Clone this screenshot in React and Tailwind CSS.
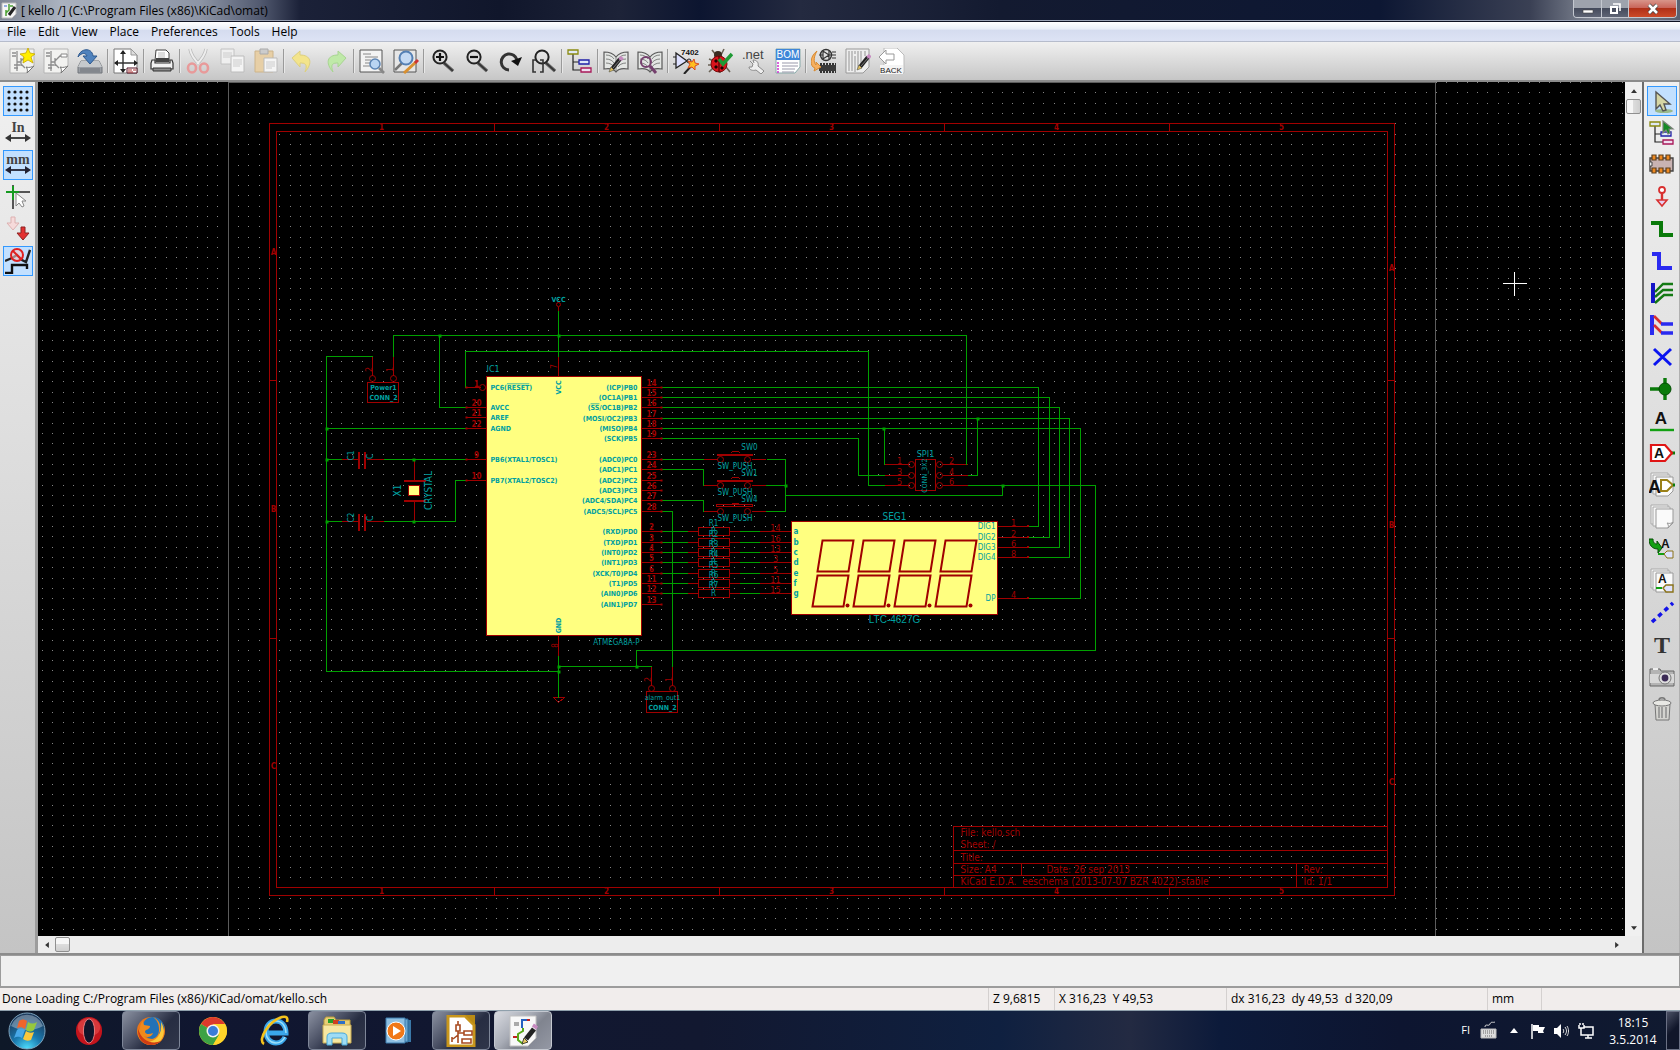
import React from "react";

const UI = "font-['Open_Sans','Noto_Sans',sans-serif]";

/* ---------- small drawing helpers ---------- */

function Icon({ children, size = 26 }) {
  return (
    <svg width={size} height={size} viewBox="0 0 26 26" fill="none" aria-hidden="true" className="shrink-0">
      {children}
    </svg>
  );
}

const Pencil = ({ x = 0, y = 0 }) => (
  <g transform={`translate(${x} ${y})`}>
    <path d="M3 12 11 2" stroke="#222" strokeWidth="4" />
    <path d="M4 11 11 3" stroke="#777" strokeWidth="1" />
    <path d="M11 3 13 0" stroke="#c78ac0" strokeWidth="4" />
    <path d="m0 15 2-5 3 3z" fill="#e0c060" stroke="#554" strokeWidth=".6" />
  </g>
);

const SheetIcon = ({ star }) => (
  <Icon>
    <path d="M1 1h24v17l-7 7H1z" fill="#f2f2f0" stroke="#b4b4b4" />
    <path d="M18 25c1-3 0-5-1-6 3 1 6 0 8-1z" fill="#fff" stroke="#777" />
    <path d="M3 5h4M3 8h4M8 3v20M8 14h4M12 10v8M12 13l5-5h3M12 16l4 4M5 17h6M5 20h4" stroke="#8d8d8d" strokeWidth="1.3" />
    {star ? (
      <path d="m19 0 2 5 5 1-4 3 2 6-5-3-5 3 1-6-4-3 6-1z" fill="#ffee00" stroke="#c8a800" strokeWidth=".8" />
    ) : (
      <path d="M18 6h6v3h-6z" fill="#fff" stroke="#888" />
    )}
  </Icon>
);

const Glass = ({ sign, box }) => (
  <Icon>
    <path d="m15 15 9 8" stroke="#666" strokeWidth="3.4" />
    <path d="m15 15 9 8" stroke="#333" strokeWidth="1.6" />
    <circle cx="11" cy="9" r="6.6" fill={box ? "none" : "#dcdcdc"} stroke="#222" strokeWidth="2" />
    {sign && <path d={sign} stroke="#111" strokeWidth="2.2" />}
    {box && <path d="M5 12H2v12h3M9 12h3v12H9" stroke="#333" strokeWidth="1.6" />}
  </Icon>
);

const Tree = ({ cursor }) => (
  <Icon>
    <path d="M6 6v16h8M6 14h6" stroke="#222" strokeWidth="1.2" />
    <path d="M1 2h10v4H1z" fill="#dfe8f4" stroke="#8a8a10" strokeWidth="1.3" />
    <path d="M12 12h10v4H12z" fill="#dfe8f8" stroke="#2020a8" strokeWidth="1.3" />
    <path d="M14 20h10v4H14z" fill="#f0dff0" stroke="#a81858" strokeWidth="1.3" />
    {cursor && <path d="M14 1v12l3-3 2 4 2-1-1-4h4z" fill="#158a25" stroke="#7a8078" strokeWidth="1.2" />}
  </Icon>
);

const Book = ({ children }) => (
  <Icon>
    <path d="M1 4c5 0 9 1 12 5 3-4 7-5 12-5v17c-6-1-10 0-12 3-2-3-6-4-12-3z" fill="#e4e6e4" stroke="#5a5a5a" strokeWidth="1.2" />
    <path d="M13 9v14M3 7c4 0 7 2 8 4M3 11c4 0 7 2 8 4M3 15c4 0 7 2 8 4M23 7c-4 0-7 2-8 4M23 11c-4 0-7 2-8 4M23 15c-4 0-7 2-8 4" stroke="#808280" />
    {children}
  </Icon>
);

const label = "font-['Liberation_Sans',sans-serif] font-bold";
const light = "font-['Liberation_Sans',sans-serif]";
const serif = "font-['Liberation_Serif',serif] font-bold";

/* ---------- top toolbar ---------- */

const TOP = [
  ["New schematic", <SheetIcon star />],
  ["Open schematic", <SheetIcon />],
  ["Save", <Icon>
    <path d="M4 13h18l3 6v6H1v-6z" fill="#9a9ea4" stroke="#70747a" />
    <path d="M4 13h18l3 6H1z" fill="#c6c9cc" />
    <path d="M3 21h20M3 23h20" stroke="#6d7177" />
    <path d="M1 9C3 0 15-1 16 8h4l-7 8-7-8h4C9 5 5 4 1 9z" fill="#4f82bd" stroke="#2d588e" />
  </Icon>],
  null,
  ["Page settings", <Icon>
    <path d="M1 1h17l6 6v18H1z" fill="#fff" stroke="#777" />
    <path d="M18 1v6h6z" fill="#ddd" stroke="#999" />
    <path d="M2 15h22M10 3v21" stroke="#333" strokeWidth="1.4" />
    <path d="m5 12-4 3 4 3zM21 12l4 3-4 3zM7 6l3-4 3 4zM7 21l3 4 3-4z" fill="#222" />
    <path d="M14 20h10v5H14z" fill="#fff" stroke="#512" /><path d="M15 22h4M20 22h3M15 24h5" stroke="#a33" />
  </Icon>],
  null,
  ["Print", <Icon>
    <path d="M7 2h10l3 3v8H6z" fill="#fff" stroke="#444" />
    <path d="M9 5h7M9 7h7M9 9h7" stroke="#bbb" />
    <path d="M7 10h13v4H7z" fill="#444" />
    <path d="M3 12h3v3h15v-3h2l1 3v6H2v-6z" fill="#f1f1f1" stroke="#333" strokeWidth="1.2" />
    <path d="M4 20h18v3H4z" fill="#8b8b8b" stroke="#333" />
  </Icon>],
  null,
  ["Cut", <Icon>
    <path d="M5 1c1 6 5 11 9 15M21 1c-1 6-5 11-9 15" stroke="#b9b9b9" strokeWidth="3.4" />
    <path d="M5 1c1 6 5 11 9 15M21 1c-1 6-5 11-9 15" stroke="#eee" strokeWidth="1.8" />
    <ellipse cx="7" cy="20" rx="4" ry="4.5" stroke="#e89a9a" strokeWidth="2.6" />
    <ellipse cx="19" cy="20" rx="4" ry="4.5" stroke="#e89a9a" strokeWidth="2.6" />
  </Icon>],
  ["Copy", <Icon>
    <path d="M2 1h13v15H2z" fill="#efefef" stroke="#c2c2c2" /><path d="M4 5h9M4 7h9M4 9h7" stroke="#ccc" />
    <path d="M12 8h13v16H12z" fill="#f4f4f4" stroke="#bcbcbc" /><path d="M14 12h9M14 14h9M14 16h9M14 18h7" stroke="#ccc" />
  </Icon>],
  ["Paste", <Icon>
    <path d="M2 3h18v21H2z" fill="#e7cfa6" stroke="#cdb48a" /><path d="M7 1h8v5H7z" fill="#ccc" stroke="#aaa" />
    <path d="M11 10h13v14H11z" fill="#f5f5f5" stroke="#bbb" /><path d="M13 14h9M13 16h9M13 18h9M13 20h6" stroke="#ccc" />
  </Icon>],
  null,
  ["Undo", <Icon><path d="M3 10l8-7v4c11 0 13 8 5 17 3-8 0-9-5-9v4z" fill="#f3e48b" stroke="#dccf80" /></Icon>],
  ["Redo", <Icon><path d="M23 10l-8-7v4C4 7 2 15 10 24c-3-8 0-9 5-9v4z" fill="#bfe9a8" stroke="#a8d492" /></Icon>],
  null,
  ["Find", <Icon>
    <path d="M1 2h22v22H1z" fill="#f3f3f3" stroke="#555" /><path d="M4 6h8M6 9h13M6 12h6M6 15h5M4 18h7" stroke="#888" />
    <circle cx="16" cy="16" r="5" fill="#b9d4f2" stroke="#5c84b4" strokeWidth="1.5" /><path d="m20 20 5 5" stroke="#888" strokeWidth="2.6" />
  </Icon>],
  ["Find and replace", <Icon>
    <path d="M1 2h22v22H1z" fill="#e6e6e6" stroke="#555" /><path d="m2 22 7-7" stroke="#777" strokeWidth="2.5" />
    <circle cx="13" cy="10" r="6.5" fill="#c5daf3" stroke="#5580b4" strokeWidth="2" />
    <path d="m11 25 12-11" stroke="#d99030" strokeWidth="3" /><path d="m22 15 3-3" stroke="#c33" strokeWidth="3" />
  </Icon>],
  null,
  ["Zoom in", <Glass sign="M7 9h8M11 5v8" />],
  ["Zoom out", <Glass sign="M7 9h8" />],
  ["Redraw view", <Icon><path d="M12 22A8 8 0 1 1 20 12" stroke="#333" strokeWidth="3" /><path d="m14 13 11-4-4 9z" fill="#111" /></Icon>],
  ["Zoom to fit", <Glass box />],
  null,
  ["Navigate hierarchy", <Tree />],
  null,
  ["Library editor", <Book><Pencil x={6} y={9} /></Book>],
  ["Library browser", <Book><circle cx="9" cy="14" r="5" stroke="#75406e" strokeWidth="2" /><path d="m13 18 6 7" stroke="#75406e" strokeWidth="3" /></Book>],
  null,
  ["Annotate schematic", <Icon>
    <text x="8" y="7" fontSize="8" className={label} fill="#111">7402</text>
    <path d="M3 5v15l11-7z" fill="#dde0ff" stroke="#222" strokeWidth="1.3" /><path d="M0 9h3M0 16h3" stroke="#222" />
    <circle cx="16" cy="13" r="2" stroke="#222" /><path d="m11 26 9-10" stroke="#222" strokeWidth="2" />
    <path d="m21 11 1 4 4 1-4 2 0 4-3-3-4 1 2-4-2-3 4 1z" fill="#ffbf20" stroke="#d84a20" />
  </Icon>],
  ["Electric rules check", <Icon>
    <path d="M5 2l4 5M17 1l-3 6M2 11l5 2M2 24l5-5M13 25v-3M23 24l-4-5M1 17h4" stroke="#6a6256" strokeWidth="1.6" />
    <circle cx="11" cy="7" r="4" fill="#3b2b20" /><circle cx="12" cy="16" r="8" fill="#d8141c" stroke="#7a0a0a" />
    <path d="M12 8v16" stroke="#300" /><path d="M8 12h2v2H8zM8 18h2v2H8zM14 19h2v2h-2z" fill="#200" stroke="#200" />
    <path d="m12 11 4 5 9-10" stroke="#1f9a35" strokeWidth="3.6" />
  </Icon>],
  ["Generate netlist", <Icon>
    <text x="1" y="11" fontSize="13" className={light} fill="#444">.net</text>
    <path d="M9 14l3 3-1 3-3 0c0 3 4 4 7 3l5 4 3-3-6-5c1-3-1-6-5-6l1 3" transform="translate(0 -1)" fill="#eee" stroke="#8a8a8a" />
  </Icon>],
  ["Bill of materials", <Icon>
    <path d="M1 1h24v18l-5 6H1z" fill="#fff" stroke="#8aa" /><path d="M1 1h24v11H1z" fill="#3f86d8" />
    <text x="13" y="10" textAnchor="middle" fontSize="10" className={light} fill="#fff">BOM</text>
    <path d="M3 14v11" stroke="#d030d0" strokeWidth="1.5" strokeDasharray="2 1" /><path d="M7 15h16M7 18h16M7 21h13M7 24h12" stroke="#99a" />
  </Icon>],
  null,
  ["Assign footprints", <Icon>
    <circle cx="15" cy="7" r="5.500" stroke="#333" strokeWidth="1.4" /><path d="M8 7h4M18 7h7M12 3v8l6-4zM18 3v8M21 4h4M21 10h4" stroke="#333" strokeWidth="1.2" />
    <path d="M8 17h17v6H8z" fill="#3a3a3a" /><path d="M9 24h16M9 16h16" stroke="#333" strokeWidth="2" strokeDasharray="2 1" />
    <path d="M6 3C-2 9-1 19 4 20l-1 3 7-4-5-5v3C2 14 3 8 6 3z" fill="#f6b060" stroke="#d88a30" />
  </Icon>],
  ["Board editor", <Icon>
    <path d="M1 1h23v18l-6 6H1z" fill="#eee" stroke="#999" />
    <path d="M4 3v20M7 3v20M10 8v16M13 3v18M16 3v13M10 3v3M20 3v5" stroke="#b2b2b2" strokeWidth="1.5" /><Pencil x={12} y={7} />
  </Icon>],
  ["Back annotate", <Icon>
    <path d="M5 0h13l7 7v18H5z" fill="#fff" stroke="#bbb" /><path d="m0 9 7-7v4h8v6H7v4z" fill="#fff" stroke="#999" />
    <path d="M1 17h23v9H1z" fill="#f4f4f4" /><text x="12" y="25" textAnchor="middle" fontSize="8" className={light} fill="#222">BACK</text>
  </Icon>],
];

/* ---------- left toolbar ---------- */

const LEFT = [
  ["Show grid", true, <Icon>{[4, 10, 16, 22].map((x) => [4, 10, 16, 22].map((y) => <circle key={x + "-" + y} cx={x} cy={y} r="1.6" fill="#111" />))}</Icon>],
  ["Units in inches", false, <Icon>
    <text x="13" y="12" textAnchor="middle" fontSize="14" className={serif} fill="#444">In</text>
    <path d="M4 18h18" stroke="#333" strokeWidth="1.8" /><path d="m6 14-6 4 6 4zM20 14l6 4-6 4z" fill="#333" />
  </Icon>],
  ["Units in millimeters", true, <Icon>
    <text x="13" y="12" textAnchor="middle" fontSize="14" className={serif} fill="#444">mm</text>
    <path d="M4 18h18" stroke="#223" strokeWidth="1.8" /><path d="m6 14-6 4 6 4zM20 14l6 4-6 4z" fill="#223" />
  </Icon>],
  ["Cursor shape", false, <Icon>
    <path d="M1 8h24M8 1v24" stroke="#555" strokeWidth="2" /><path d="M1 8h13M8 2v14" stroke="#169a20" strokeWidth="2" />
    <path d="M11 9v13l3-3 3 4 2-1-2-5h4z" fill="#fff" stroke="#888" />
  </Icon>],
  ["Show hidden pins", false, <Icon>
    <path d="M6 1h4v6h4l-6 7-6-7h4z" fill="#f6dada" stroke="#dcb0b0" /><path d="M16 11h4v6h4l-6 7-6-7h4z" fill="#e33030" stroke="#8c2222" />
  </Icon>],
  ["Horizontal and vertical orientation only", true, <Icon>
    <path d="m0 13 7-3 5-3 5 5 4 2 4-12" stroke="#222" strokeWidth="2.4" /><path d="M0 25h7v-8h15v4" stroke="#111" strokeWidth="2.4" />
    <circle cx="12" cy="7" r="6" fill="#f7c8c8" fillOpacity=".6" stroke="#e02020" strokeWidth="2" /><path d="m8 3 8 8" stroke="#e02020" strokeWidth="2" />
  </Icon>],
];

/* ---------- right toolbar ---------- */

const Pages = ({ children }) => (
  <Icon>
    <path d="M2 1h17v19H2z" fill="#f4f4f4" stroke="#aaa" /><path d="M4 3h17v19H4z" fill="#f6f6f6" stroke="#aaa" />
    <path d="M7 5h17v14l-5 5H7z" fill="#fafafa" stroke="#999" />{children}
  </Icon>
);
const flag = <path d="M14 20l3-3h7v7h-7z" fill="#dfe3ff" stroke="#8a7318" strokeWidth="1.4" />;

const RIGHT = [
  ["Select", true, <Icon><ellipse cx="15" cy="23" rx="9" ry="2" fill="#9ab88a" /><path d="M7 4v17l4-4 3 6 3-1-2-6h6z" fill="#d6d6a4" stroke="#555" strokeWidth="1.4" /></Icon>],
  ["Ascend or descend hierarchy", false, <Tree cursor />],
  ["Place component", false, <Icon>
    <path d="M1 6h23v13H1z" fill="#c9b3b3" stroke="#444" strokeWidth="1.4" />
    {[4, 11, 18].map((x) => [3, 16].map((y) => <path key={x + "-" + y} d={`M${x - 1} ${y}h4v5h-4z`} fill="#f08a20" stroke="#5c4020" strokeWidth="1.2" />))}
    <path d="M1 10h2v4H1" fill="#eee" stroke="#444" />
  </Icon>],
  ["Place power port", false, <Icon><circle cx="13" cy="6" r="3" fill="#fff" stroke="#d83030" strokeWidth="1.8" /><path d="M13 9v9" stroke="#d83030" strokeWidth="2.4" /><path d="M8 16h10l-5 6z" fill="#e8d0f0" stroke="#d83030" strokeWidth="1.6" /></Icon>],
  ["Place wire", false, <Icon><path d="M2 7h10v12h12" stroke="#0a7a0a" strokeWidth="4" /></Icon>],
  ["Place bus", false, <Icon><path d="M3 6h7v14h13" stroke="#2a2af0" strokeWidth="4" /></Icon>],
  ["Place wire to bus entry", false, <Icon><path d="M4 3v20" stroke="#1515c8" strokeWidth="4" /><path d="m6 12 8-8h10M6 17l8-7h10M6 23l9-8h9" stroke="#147a14" strokeWidth="2.4" /></Icon>],
  ["Place bus to bus entry", false, <Icon><path d="M3 3v20" stroke="#2a2af0" strokeWidth="4" /><path d="m5 4 8 8M5 13l8 8" stroke="#d83030" strokeWidth="2.6" /><path d="M12 12h12M12 21h12" stroke="#2a2af0" strokeWidth="3.4" /></Icon>],
  ["Place no-connect flag", false, <Icon><path d="m5 5 17 16M22 5 5 21" stroke="#0a14f0" strokeWidth="3" /></Icon>],
  ["Place junction", false, <Icon><path d="M1 13h14M16 2v22" stroke="#0a7a0a" strokeWidth="3.4" /><circle cx="16" cy="13" r="6" fill="#0a7a0a" stroke="#054f05" /></Icon>],
  ["Place net name", false, <Icon><text x="12" y="16" textAnchor="middle" fontSize="17" className={label} fill="#111">A</text><path d="M1 22h24" stroke="#12a012" strokeWidth="2.4" /></Icon>],
  ["Place global label", false, <Icon><path d="M22 13h4" stroke="#0a7a0a" strokeWidth="3" /><path d="M2 5h14l7 8-7 8H2z" fill="#fff" stroke="#e01515" strokeWidth="2.2" /><text x="10" y="18" textAnchor="middle" fontSize="14" className={label} fill="#111">A</text></Icon>],
  ["Place hierarchical label", false, <Pages><text x="-1" y="21" fontSize="18" className={label} fill="#111">A</text><path d="M12 8h6l6 5-6 6h-6z" fill="#fff" stroke="#9a8018" strokeWidth="2" /><path d="M24 13h2" stroke="#0a7a0a" strokeWidth="3" /></Pages>],
  ["Place hierarchical sheet", false, <Pages><path d="M19 24c1-2 0-4-1-5 3 1 5 0 6-1z" fill="#fff" stroke="#999" /></Pages>],
  ["Import hierarchical label", false, <Icon><text x="12" y="12" fontSize="12" className={label} fill="#111">A</text><path d="M0 3h4c0 4 2 5 4 5V5l5 7-4 5v-4C3 13 0 9 0 3z" fill="#12a012" stroke="#064f06" /><path d="M9 18h8" stroke="#12a012" strokeWidth="2" /><path d="m15 18 3-3h6v7h-6z" fill="#dfe3ff" stroke="#8a7318" /></Icon>],
  ["Place hierarchical pin", false, <Pages><text x="9" y="15" fontSize="12" className={label} fill="#111">A</text><path d="M7 20h6" stroke="#12a012" strokeWidth="2" />{flag}</Pages>],
  ["Place graphic line", false, <Icon><path d="M3 22 24 3" stroke="#1212e8" strokeWidth="3.6" strokeDasharray="4.5 4" /></Icon>],
  ["Place text", false, <Icon><text x="13" y="21" textAnchor="middle" fontSize="24" className={serif} fill="#333">T</text></Icon>],
  ["Add image", false, <Icon><path d="M1 5h10l1 2h13v15H1z" fill="#b4b4b4" stroke="#666" /><path d="M1 10h24v9H1z" fill="#d8d8d8" /><path d="M4 5h5" stroke="#eee" strokeWidth="2" /><circle cx="16" cy="14" r="6" fill="#ddd" stroke="#777" /><circle cx="16" cy="14" r="3.4" fill="#3b2a55" /></Icon>],
  ["Delete", false, <Icon><path d="M6 8h15l-1 16H7z" fill="#d4d4d0" stroke="#777" /><path d="M10 11v11M13 11v11M17 11v11" stroke="#888" strokeWidth="1.4" /><ellipse cx="13" cy="7" rx="9" ry="3" fill="#e8e8e4" stroke="#777" /><path d="M10 4c0-3 6-3 6 0" stroke="#777" strokeWidth="1.4" /></Icon>],
];

/* ---------- schematic ---------- */

const RED = "#a00000";
const TEAL = "#00a0a0";
const NARROW = "font-['DejaVu_Sans_Condensed','DejaVu_Sans',sans-serif]";
const NARROW_BOLD = "font-['DejaVu_Sans_Condensed','DejaVu_Sans',sans-serif] font-bold";

function T({ x, y, s = 8, a = "start", c = TEAL, r, bold, wide, children }) {
  return (
    <text x={x} y={y} fontSize={s} textAnchor={a} fill={c} dominantBaseline="central"
      transform={r ? `rotate(-90 ${x} ${y})` : undefined}
      className={wide ? light : bold ? NARROW_BOLD : NARROW}>{children}</text>
  );
}

function gridPath() {
  let d = "";
  for (let i = -18; i < 240; i++) {
    const x = Math.floor(228.22 + i * 10.326);
    for (let j = 0; j < 130; j++) d += `M${x} ${Math.floor(82.4 + j * 10.326)}h1v1h-1z`;
  }
  return d;
}
const GRID = gridPath();

const PB = [
  [387, "(ICP)PB0", "14"], [397, "(OC1A)PB1", "15"], [407, "PB2", "16"], [418, "(MOSI/OC2)PB3", "17"],
  [428, "(MISO)PB4", "18"], [438, "(SCK)PB5", "19"], [459, "(ADC0)PC0", "23"], [469, "(ADC1)PC1", "24"],
  [480, "(ADC2)PC2", "25"], [490, "(ADC3)PC3", "26"], [500, "(ADC4/SDA)PC4", "27"], [511, "(ADC5/SCL)PC5", "28"],
  [531, "(RXD)PD0", "2"], [542, "(TXD)PD1", "3"], [552, "(INT0)PD2", "4"], [562, "(INT1)PD3", "5"],
  [573, "(XCK/T0)PD4", "6"], [583, "(T1)PD5", "11"], [593, "(AIN0)PD6", "12"], [604, "(AIN1)PD7", "13"],
];
const PL = [[407, "AVCC", "20"], [417, "AREF", "21"], [428, "AGND", "22"], [459, "PB6(XTAL1/TOSC1)", "9"], [480, "PB7(XTAL2/TOSC2)", "10"]];
const SEG = [[531, "a", "14"], [542, "b", "16"], [552, "c", "13"], [562, "d", "3"], [573, "e", "5"], [583, "f", "11"], [593, "g", "15"]];
const DIG = [[526, "DIG1", "1"], [537, "DIG2", "2"], [547, "DIG3", "6"], [557, "DIG4", "8"], [598, "DP", "4"]];
const SWITCH = [[459, "SW0"], [485, "SW1"], [511, "SW4"]];
const JUNCTIONS = [[439, 335], [558, 335], [326, 428], [326, 459], [326, 521], [413, 459], [413, 521], [785, 485], [883, 428], [977, 418], [1002, 485], [558, 666], [558, 671], [636, 666]];

const WIRES = [
  "M558 310V356", "M393 356V335H966V464", "M372 356H326V671H558", "M439 335V407H465", "M465 387V351H868V485H884",
  "M326 428H465", "M326 459H341M383 459H465", "M326 521H341M383 521H455V480H465",
  "M661 387H1038V526H1028", "M661 397H1049V537H1028", "M661 407H1059V547H1028", "M661 418H1069V557H1028", "M661 428H1080V598H1028",
  "M661 438H858V475H884", "M884 428V464", "M967 475H977V418", "M967 485H1095V650H636V666", "M1002 485V495H785",
  "M661 459H703M766 459H785V511H765M765 485H785", "M661 469H703V485", "M661 500H703V511", "M661 511H672V666",
  "M558 655V697", "M558 666H651",
].join("");

const PINS = [
  "M558 306V310M558 356V376M558 635V655", "M393 356V375M372 356V375M651 666V685M672 666V685",
  "M465 387H480", "M341 459H358M366 459H383M341 521H358M366 521H383", "M414 459V480M414 500V521",
  "M884 464H908M884 475H908M884 485H908M942 464H967M942 475H967M942 485H967",
].join("");

const COLS = [["1", 381], ["2", 606], ["3", 831], ["4", 1056], ["5", 1281]];

function Schematic() {
  return (
    <svg className="absolute inset-0 h-full w-full" role="img" aria-label="Schematic sheet kello.sch">
      <g transform="translate(-38 -82)">
        <path d={GRID} fill="#848484" shapeRendering="crispEdges" />
        <g transform="translate(0.5 0.5)">
          <g fill="none" strokeWidth="1" shapeRendering="crispEdges">
            <path d="M228 82H1435V936H228z" stroke="#5c5c5c" />
            <path stroke={RED} d="M269 123H1394V895H269zM276 131H1387V887H276zM494 123v8M719 123v8M944 123v8M1169 123v8M494 887v8M719 887v8M944 887v8M1169 887v8M269 380h7M269 638h7M1387 380h7M1387 638h7" />
            <path stroke={RED} d="M953 887V826H1387M953 850H1387M953 863H1387M953 875H1387M1021 863v12M1296 863v24" />
          </g>
          {COLS.map(([n, x]) => <g key={n}><T x={x} y={127} a="middle" c={RED} s={8} bold>{n}</T><T x={x} y={891} a="middle" c={RED} s={8} bold>{n}</T></g>)}
          {[["A", 252, 268], ["B", 509, 525], ["C", 766, 782]].map(([n, l, r]) => <g key={n}><T x={273} y={l} a="middle" c={RED} bold>{n}</T><T x={1391} y={r} a="middle" c={RED} bold>{n}</T></g>)}
          <T x={960} y={832} s={10} c={RED}>File: kello.sch</T>
          <T x={960} y={844} s={10} c={RED}>Sheet: /</T>
          <T x={960} y={857} s={10} c={RED}>Title:</T>
          <T x={960} y={869} s={10} c={RED}>Size: A4</T>
          <T x={1046} y={869} s={10} c={RED}>Date: 26 sep 2013</T>
          <T x={1303} y={869} s={10} c={RED}>Rev:</T>
          <T x={960} y={881} s={10} c={RED}>{"KiCad E.D.A.\u00a0 eeschema (2013-07-07 BZR 4022)-stable"}</T>
          <T x={1303} y={881} s={10} c={RED}>Id: 1/1</T>

          {/* component bodies */}
          <g shapeRendering="crispEdges" stroke={RED} fill="#ffff80">
            <path d="M486 376H641V635H486z" /><path d="M791 521H997V614H791z" /><path d="M408 485h11v10h-11z" />
            <g fill="none">
              <path d="M367 382h31v20h-31zM646 691h31v21h-31zM915 459h20v31h-20z" />
              <path d={PINS} />
              <path d="M358 451v17M364 451v17M358 513v17M364 513v17M403 480h22M403 500h22" strokeWidth="2" />
              <path d="M553 697h11l-6 5z" />
              {PB.map(([y]) => <path key={y} d={`M641 ${y}h20`} />)}
              {PL.map(([y]) => <path key={y} d={`M465 ${y}h21`} />)}
              {DIG.map(([y]) => <path key={y} d={`M997 ${y}h31m-2 -1h2`} />)}
              {SEG.map(([y]) => <path key={y} d={`M687 ${y}h11m31 0h10m20 0h32M698 ${y - 4}h31v8h-31z`} />)}
              {SWITCH.map(([y]) => <path key={y} d={`M703 ${y}h14m34 0h14M730 ${y - 6}l2-2h6l2 2`} />)}
              <path d="M716 454h36M716 480h36" strokeWidth="2" /><path d="M716 504h36v2h-36z" />
            </g>
          </g>
          <g fill="none" stroke={RED}>
            {[[372, 378], [393, 378], [651, 688], [672, 688], [482, 387], [911, 464], [911, 475], [911, 485], [939, 464], [939, 475], [939, 485]].map(([x, y]) => <circle key={x + "-" + y} cx={x} cy={y} r="3" />)}
            {SWITCH.map(([y]) => <g key={y}><circle cx="720" cy={y} r="3" /><circle cx="747" cy={y} r="3" /></g>)}
            <circle cx="558" cy="304" r="2" />
            {[0, 41, 82, 123].map((o) => (
              <g key={o} transform={`translate(${o} 0)`}>
                <path d="M822 540h31l-5 31h-31zM817 575h31l-5 31h-31z" strokeWidth="2" />
                <circle cx="847" cy="605" r="2" fill={RED} stroke="none" />
              </g>
            ))}
          </g>

          {/* wires and junctions */}
          <path d={WIRES} stroke="#00a000" fill="none" shapeRendering="crispEdges" />
          {SEG.map(([y]) => <path key={y} d={`M661 ${y}h26m52 0h20`} stroke="#00a000" shapeRendering="crispEdges" />)}
          {JUNCTIONS.map(([x, y]) => <rect key={x + "-" + y} x={x - 1} y={y - 1} width="3" height="3" fill="#00a000" />)}
          {PB.map(([y]) => <rect key={y} x="660" y={y - 1} width="2" height="2" fill={RED} />)}
          {[407, 417, 428, 459, 480, 387].map((y) => <rect key={y} x="465" y={y - 1} width="2" height="2" fill={RED} />)}

          {/* texts */}
          <T x={558} y={299} s={7} a="middle" bold>VCC</T>
          <T x={486} y={368} s={9}>IC1</T>
          <T x={558} y={387} s={7} a="middle" bold r>VCC</T>
          <T x={558} y={625} s={7} a="middle" bold r>GND</T>
          <T x={554} y={366} s={8} a="middle" c={RED} r>7</T>
          <T x={555} y={645} s={8} a="middle" c={RED} r>8</T>
          <T x={490} y={387} s={7} bold>PC6(<tspan className="overline">RESET</tspan>)</T>
          <T x={476} y={384} s={8} a="middle" c={RED} bold>1</T>
          {PL.map(([y, n, p]) => <g key={n}><T x={490} y={y} s={7} bold>{n}</T><T x={476} y={y - 4} s={8} a="middle" c={RED} bold>{p}</T></g>)}
          {PB.map(([y, n, p]) => (
            <g key={n}>
              <T x={637} y={y} s={7} a="end" bold>{n === "PB2" ? <>(<tspan className="overline">SS</tspan>/OC1B)PB2</> : n}</T>
              <T x={651} y={y - 4} a="middle" c={RED} bold>{p}</T>
            </g>
          ))}
          <T x={383} y={387} s={7} a="middle" bold>Power1</T>
          <T x={383} y={397} s={7} a="middle" bold>CONN_2</T>
          <T x={368} y={369} s={9} a="middle" c={RED} r>2</T>
          <T x={389} y={369} s={9} a="middle" c={RED} r>1</T>
          <T x={351} y={455} a="middle" r>C1</T><T x={370} y={456} a="middle" r>C</T>
          <T x={351} y={517} a="middle" r>C2</T><T x={370} y={518} a="middle" r>C</T>
          <T x={397} y={490} s={10} a="middle" r>X1</T>
          <T x={428} y={490} s={10} a="middle" r>CRYSTAL</T>
          {SWITCH.map(([y, n]) => <g key={n}><T x={749} y={y - 12} s={8} a="middle">{n}</T><T x={717} y={y + 7} s={8}>SW_PUSH</T></g>)}
          {SEG.map(([y, n, p], i) => (
            <g key={n}>
              <T x={713} y={y} s={8} a="middle">R</T>
              <T x={713} y={y - 8} s={8} a="middle">{"R" + (i + 1)}</T>
              <T x={775} y={y - 4} s={9} a="middle" c={RED}>{p}</T>
              <T x={793} y={y} s={8} bold>{n}</T>
            </g>
          ))}
          {DIG.map(([y, n, p]) => <g key={n}><T x={995} y={y} s={8} a="end">{n}</T><T x={1013} y={y - 4} s={9} a="middle" c={RED}>{p}</T></g>)}
          <T x={894} y={516} s={10} a="middle">SEG1</T>
          <T x={894} y={619} s={10} a="middle" wide>LTC-4627G</T>
          <T x={925} y={453} s={9} a="middle">SPI1</T>
          <T x={924} y={475} s={7} a="middle" r>CONN_3X2</T>
          {[["1", "2", 460], ["3", "4", 471], ["5", "6", 481]].map(([l, r, y]) => <g key={y}><T x={899} y={y} s={9} a="middle" c={RED}>{l}</T><T x={951} y={y} s={9} a="middle" c={RED}>{r}</T></g>)}
          <T x={639} y={642} s={8} a="end">ATMEGA8A-P</T>
          <T x={662} y={697} s={7} a="middle">alarm_out1</T>
          <T x={662} y={707} s={7} a="middle" bold>CONN_2</T>
          <T x={647} y={679} s={9} a="middle" c={RED} r>2</T>
          <T x={668} y={679} s={9} a="middle" c={RED} r>1</T>
          <path d="M1502 283h24M1514 271v24" stroke="#fff" shapeRendering="crispEdges" />
        </g>
      </g>
    </svg>
  );
}

/* ---------- taskbar icons ---------- */

const TASKS = [
  ["Opera", "", <svg width="28" height="30" viewBox="0 0 30 32"><ellipse cx="15" cy="16" rx="14" ry="15" fill="#c4141c" /><ellipse cx="15" cy="12" rx="12" ry="10" fill="#e65050" opacity=".6" /><ellipse cx="15" cy="16" rx="6" ry="13" fill="#10142a" stroke="#f08080" /></svg>],
  ["Firefox", "open", <svg width="32" height="32" viewBox="0 0 32 32"><circle cx="16" cy="16" r="14" fill="#e8751a" /><circle cx="18" cy="13" r="11" fill="#2272b8" /><path d="M18 2c7 3 9 10 6 17 3-1 5-4 5-6 2 10-4 17-13 17C7 30 1 22 3 13l2 2c0-5 1-7 3-9l1 4 6 1c0 4-5 3-5 6 1 3 5 2 8 1-1 4-6 5-9 3 5 6 15 3 15-6 0-6-2-10-6-13z" fill="#f08a1c" /><path d="M26 7c4 6 4 15-2 20-5 4-12 3-16-1 9 3 20-3 18-19z" fill="#fcc93a" /><path d="M3 13c-1 9 4 17 13 17 5 0 8-2 10-4-9 4-20 0-23-13z" fill="#cf3d14" /></svg>],
  ["Chrome", "", <svg width="30" height="30" viewBox="0 0 30 30"><circle cx="15" cy="15" r="14" fill="#ffd42a" /><path d="M15 15 2.900 8A14 14 0 0 1 27.100 8z" fill="#dc3a2c" /><path d="M15 15 2.900 8A14 14 0 0 0 15 29l6-10z" fill="#3da244" /><path d="M15 8h12.100A14 14 0 0 1 15 29l6-10z" fill="#ffd42a" /><circle cx="15" cy="15" r="6.500" fill="#f4f4f4" /><circle cx="15" cy="15" r="5" fill="#3a7cd8" /></svg>],
  ["Internet Explorer", "", <svg width="32" height="32" viewBox="0 0 32 32" fill="none"><path d="M26 22c-2 4-5 6-9 6-6 0-10-5-10-11S11 6 17 6s10 5 10 12H9" stroke="#3aa6ea" strokeWidth="5" /><path d="M26 22c-2 4-5 6-9 6-6 0-10-5-10-11S11 6 17 6s10 5 10 12" stroke="#9be0fb" strokeWidth="1.500" /><path d="M5 29C-2 25 10 6 23 2c5-1 6 1 5 5" stroke="#f4c21c" strokeWidth="2.600" /></svg>],
  ["Explorer", "open", <svg width="32" height="32" viewBox="0 0 32 32"><path d="M3 5l2-3h8l2 3h14v22H3z" fill="#e9cf74" stroke="#b89a3c" /><path d="M7 4h6v4H7z" fill="#28a028" /><path d="M12 5h6v4h-6z" fill="#d04020" /><path d="M17 6h7v3h-7z" fill="#2c70c8" /><path d="M2 10h28v18H2z" fill="#f7e7a2" stroke="#c9ab50" /><path d="M6 30V22c0-3 2-4 5-4h10c3 0 5 1 5 4v8h-5v-7H11v7z" fill="#9edcf5" stroke="#4aa8d8" /></svg>],
  ["Media Player", "", <svg width="28" height="28" viewBox="0 0 28 28"><path d="M7 3h19v22H7z" fill="#3a78a8" /><path d="M4 2h19v23H4z" fill="#6aa6d0" stroke="#2d6a98" /><path d="M1 1h19v25H1z" fill="#8fc0e2" stroke="#3c7cae" /><circle cx="11" cy="14" r="9" fill="#f07818" stroke="#fff" strokeWidth="1" /><path d="m8 9 8 5-8 5z" fill="#fff" /></svg>],
  ["KiCad", "open", <svg width="32" height="32" viewBox="0 0 32 32" fill="none"><path d="M3 1h17l9 9v21H3z" fill="#fff" stroke="#c8961c" strokeWidth="3" /><path d="M20 0h10v10z" fill="#b98a14" /><path d="M13 6v4M11 10h4v6h-4zM13 16v12M13 18h6M19 16h8v4h-8zM13 20l-5 4M17 24h9v4h-9zM7 22v5" stroke="#a84a20" strokeWidth="1.600" /></svg>],
  ["Eeschema", "active", <svg width="32" height="32" viewBox="0 0 32 32" fill="none"><path d="M3 1h26v22l-8 8H3z" fill="#f8f8f8" stroke="#c0c0c0" /><path d="M7 7h5v4H7z" fill="#aaa" /><path d="M15 13V5h6" stroke="#2460c0" strokeWidth="2" /><path d="M20 5h3M6 22h5" stroke="#c02020" strokeWidth="2" /><path d="M16 13v3l-5 3v6l5 4" stroke="#58a818" strokeWidth="2" /><path d="m19 24 8-10" stroke="#222" strokeWidth="5" /><path d="m27 13 2-3" stroke="#c78ac0" strokeWidth="5" /><path d="m15 29 2-6 4 4z" fill="#e8c860" stroke="#443" /></svg>],
];

const MENU = ["File", "Edit", "View", "Place", "Preferences", "Tools", "Help"];

const selected = "border border-[#3399ff] bg-[#c2e0ff]";

export default function App() {
  return (
    <div className={`flex h-screen w-full flex-col overflow-hidden bg-[#f0f0f0] text-[12px] text-black ${UI}`}>
      {/* title bar */}
      <header className="flex h-[22px] shrink-0 items-start border-b border-[#0c1020] bg-[linear-gradient(90deg,#7f8694_0,#aab2bf_60px,#8d95a5_200px,#525a70_260px,#1b2138_300px,#10162b_500px,#1d2338_620px,#0c1530_700px,#242a40_800px,#131a30_1000px,#0d1733_1380px,#3a4054_1530px,#8a909c_1600px,#596070_100%)]">
        <div className="flex h-[21px] w-full items-start border-b border-[#9aa2b4]">
          <div className="flex h-5 min-w-0 flex-1 items-center gap-[2px] pl-px">
            <svg width="18" height="18" viewBox="0 0 18 18" fill="none" aria-hidden="true">
              <path d="M1 2h14v11l-4 4H1z" fill="#f6f6f6" stroke="#bbb" /><path d="M8 3v6l-3 3M5 9v6M9 5h3" stroke="#4aa030" strokeWidth="1.500" /><path d="m8 14 6-8" stroke="#222" strokeWidth="3" /><path d="M3 5h3" stroke="#36c" />
            </svg>
            <h1 className="truncate pt-[2px] text-[12px] leading-5">[ kello /] (C:\Program Files (x86)\KiCad\omat)</h1>
          </div>
          <div className="mr-[3px] flex h-[18px] shrink-0 overflow-hidden rounded-b border border-t-0 border-[#c4c8d0]">
            <button aria-label="Minimize" className="flex w-[28px] items-center justify-center border-r border-[#c4c8d0] bg-[linear-gradient(#9ea3ad_45%,#454b5c_50%,#5e6474)]">
              <svg width="14" height="12" viewBox="0 0 14 12"><path d="M2 7h10v3H2z" fill="#fff" stroke="#444" strokeWidth=".6" /></svg>
            </button>
            <button aria-label="Restore" className="flex w-[27px] items-center justify-center border-r border-[#c4c8d0] bg-[linear-gradient(#9ea3ad_45%,#454b5c_50%,#5e6474)]">
              <svg width="14" height="14" viewBox="0 0 14 14" fill="none"><path d="M5 2h7v7" stroke="#fff" strokeWidth="1.600" /><path d="M3 5h6v6H3z" stroke="#fff" strokeWidth="2" /></svg>
            </button>
            <button aria-label="Close" className="flex w-[47px] items-center justify-center bg-[linear-gradient(#d8958a_0,#c9655a_45%,#b03018_50%,#cc4a28)]">
              <svg width="14" height="12" viewBox="0 0 14 12"><path d="m3 2 8 8M11 2l-8 8" stroke="#444" strokeWidth="4" /><path d="m3 2 8 8M11 2l-8 8" stroke="#fff" strokeWidth="2.600" /></svg>
            </button>
          </div>
        </div>
      </header>

      {/* menu */}
      <nav className="flex h-[20px] shrink-0 items-center gap-3 border-b border-[#b6bccc] bg-[linear-gradient(#ffffff_0,#e9eef7_38%,#d5dcef_42%,#dde3f5_100%)] pl-[7px]">
        {MENU.map((m) => <button key={m} className="leading-4">{m}</button>)}
      </nav>

      {/* main toolbar */}
      <div role="toolbar" aria-label="Main" className="flex h-[40px] shrink-0 items-center border-b-2 border-[#8c8c8c] bg-[linear-gradient(#f0f0f0,#c6c6c6)] pl-[5px]">
        {TOP.map((t, i) => t ? (
          <button key={i} aria-label={t[0]} title={t[0]} className="flex h-[34px] w-[34px] shrink-0 items-center justify-center">{t[1]}</button>
        ) : <div key={i} className="h-6 w-[2px] shrink-0 border-l border-[#9a9a9a] bg-[#e8e8e8]" />)}
      </div>

      {/* workspace */}
      <main className="flex min-h-0 flex-1 border-b-2 border-[#8c8c8c]">
        <div role="toolbar" aria-label="Options" className="flex w-[38px] shrink-0 flex-col items-start gap-[2px] border-r-[3px] border-[#9c9c9c] bg-[linear-gradient(#f0f0f0,#c4c4c4)] pt-1 pl-[3px]">
          {LEFT.map(([n, on, icon]) => (
            <button key={n} aria-label={n} title={n} className={`flex h-[30px] w-[30px] shrink-0 items-center justify-center ${on ? selected : ""}`}>{icon}</button>
          ))}
        </div>

        <div className="flex min-w-0 flex-1 flex-col">
          <div className="flex min-h-0 flex-1">
            <div className="relative min-w-0 flex-1 overflow-hidden bg-black"><Schematic /></div>
            <div className="flex w-[17px] shrink-0 flex-col items-center bg-[#f0f0f0]">
              <button aria-label="Scroll up" className="flex h-[17px] w-full items-center justify-center"><svg width="6" height="4" viewBox="0 0 8 5"><path d="m4 0 4 5H0z" fill="#333" /></svg></button>
              <div className="h-[15px] w-[15px] rounded-xs border border-[#8f8f8f] bg-[linear-gradient(90deg,#f6f6f6_45%,#dcdcdc_50%,#cfcfcf)]" />
              <div className="flex-1" />
              <button aria-label="Scroll down" className="flex h-[17px] w-full items-center justify-center"><svg width="6" height="4" viewBox="0 0 8 5"><path d="M0 0h8L4 5z" fill="#333" /></svg></button>
            </div>
          </div>
          <div className="flex h-[17px] shrink-0 items-center bg-[#ededed]">
            <button aria-label="Scroll left" className="flex h-full w-[17px] items-center justify-center"><svg width="4" height="6" viewBox="0 0 5 8"><path d="M5 0v8L0 4z" fill="#333" /></svg></button>
            <div className="h-[15px] w-[15px] rounded-xs border border-[#8f8f8f] bg-[linear-gradient(#f6f6f6_45%,#dcdcdc_50%,#cfcfcf)]" />
            <div className="flex-1" />
            <button aria-label="Scroll right" className="mr-[17px] flex h-full w-[17px] items-center justify-center"><svg width="4" height="6" viewBox="0 0 5 8"><path d="M0 0v8l5-4z" fill="#333" /></svg></button>
          </div>
        </div>

        <div role="toolbar" aria-label="Tools" className="flex w-[38px] shrink-0 flex-col items-end gap-[2px] border-r border-l-2 border-r-[#b0b0b0] border-l-[#6c6c6c] bg-[linear-gradient(#f0f0f0,#c4c4c4)] pt-1 pr-[2px]">
          {RIGHT.map(([n, on, icon]) => (
            <button key={n} aria-label={n} title={n} className={`flex h-[30px] w-[30px] shrink-0 items-center justify-center ${on ? selected : ""}`}>{icon}</button>
          ))}
        </div>
      </main>

      {/* message panel */}
      <div className="h-[33px] shrink-0 border border-b-2 border-[#9c9c9c] bg-[#f0f0f0]" />

      {/* status bar */}
      <footer className="flex h-[22px] shrink-0 items-center bg-[#f1edec] leading-[22px] whitespace-pre">
        <div className="min-w-0 flex-1 truncate pl-[2px]">Done Loading C:/Program Files (x86)/KiCad/omat/kello.sch</div>
        <div className="w-[66px] shrink-0 border-l border-[#d4d0cf] pl-1">Z 9,6815</div>
        <div className="w-[172px] shrink-0 border-l border-[#d4d0cf] pl-1">{"X 316,23  Y 49,53"}</div>
        <div className="w-[261px] shrink-0 border-l border-[#d4d0cf] pl-1">{"dx 316,23  dy 49,53  d 320,09"}</div>
        <div className="w-[54px] shrink-0 border-l border-[#d4d0cf] pl-1">mm</div>
        <div className="h-[22px] w-[139px] shrink-0 border-l border-[#d4d0cf]" />
      </footer>

      {/* taskbar */}
      <div className="flex h-10 shrink-0 items-stretch border-t border-[#8fa0ac] bg-[linear-gradient(90deg,#0e1828_0,#101630_200px,#121830_700px,#0f2040_1000px,#232a42_1130px,#0c1a3a_1220px,#0d1530_1400px,#101a30_100%)] text-white">
        <button aria-label="Start" className="mr-px flex w-[57px] items-center pl-2">
          <svg width="38" height="38" viewBox="0 0 38 38" fill="none">
            <defs><radialGradient id="orb" cx=".5" cy="1" r=".9"><stop offset="0" stopColor="#4fe0ff" /><stop offset=".45" stopColor="#1a7ab0" /><stop offset="1" stopColor="#1c3a5c" /></radialGradient></defs>
            <circle cx="19" cy="19" r="18" fill="url(#orb)" stroke="#7da3bd" />
            <path d="M3 14a17 17 0 0 1 32 0c-8 5-22 6-32 0z" fill="#cfe2ee" opacity=".4" />
            <path d="M11 9c3-2 5-2 8 0l-2 8c-3-2-5-2-8-1z" fill="#f0642c" /><path d="M20 10c3 2 6 2 9 0l-3 8c-3 2-5 2-8 0z" fill="#96c83c" />
            <path d="M9 18c3-2 5-1 8 0l-3 8c-2-1-5-2-8 0z" fill="#48a8e8" /><path d="M18 19c3 2 5 2 8 1l-3 8c-3 1-5 1-8-1z" fill="#fcc83c" />
          </svg>
        </button>
        {TASKS.map(([n, state, icon]) => (
          <button key={n} aria-label={n} title={n} className={`mx-[2px] flex w-[58px] shrink-0 items-center justify-center rounded-sm ${state === "open" ? "border border-[#7e8698] bg-[linear-gradient(135deg,#8a90a0_0,#4a5064_40%,#272d42_60%,#30364a)]" : state === "active" ? "border border-[#c4c8d0] bg-[linear-gradient(135deg,#d8dae0_0,#a8acb6_40%,#80848f_60%,#9498a4)]" : ""}`}>{icon}</button>
        ))}
        <div className="flex-1" />
        <div className="flex shrink-0 items-center text-[12px]">
          <span className="mr-[10px] text-[11px]">FI</span>
          <svg className="mr-3" width="18" height="20" viewBox="0 0 18 20" fill="none" aria-hidden="true"><path d="M5 6c0-4 4 0 5-3s3-1 5-2" stroke="#ddd" /><path d="M1 8h15v9H1z" fill="#ddd" stroke="#bbb" /><path d="M3 10h11M3 12h11M5 15h7" stroke="#666" strokeDasharray="1 1" /></svg>
          <button aria-label="Show hidden icons" className="mr-3"><svg width="8" height="5" viewBox="0 0 8 5"><path d="m4 0 4 5H0z" fill="#fff" /></svg></button>
          <svg className="mr-[6px]" width="17" height="18" viewBox="0 0 17 18" aria-hidden="true"><path d="M2 2v15" stroke="#fff" strokeWidth="1.500" /><path d="M3 3h6v2h6l-2 4 1 2H8V9H3z" fill="#fff" /></svg>
          <svg className="mr-2" width="17" height="18" viewBox="0 0 17 18" fill="none" aria-hidden="true"><path d="M1 6h3l4-4v14l-4-4H1z" fill="#fff" /><path d="M10 7c1 1 1 3 0 4M12 5c2 3 2 5 0 8M14 4c2 3 2 7 0 10" stroke="#ddd" /></svg>
          <svg className="mr-[10px]" width="17" height="18" viewBox="0 0 17 18" fill="none" aria-hidden="true"><path d="M6 5h9v8H5M7 16h7M10 13v3M1 3v3h5V3M2 1v2M5 1v2M3 6v7h2" stroke="#fff" strokeWidth="1.500" /></svg>
          <time className="w-[56px] text-center leading-[17px]">18:15<br />3.5.2014</time>
          <button aria-label="Show desktop" className="ml-[5px] h-[39px] w-[14px] border border-[#6a7084] bg-[linear-gradient(135deg,#4a5064,#10162a_50%)]" />
        </div>
      </div>
    </div>
  );
}
